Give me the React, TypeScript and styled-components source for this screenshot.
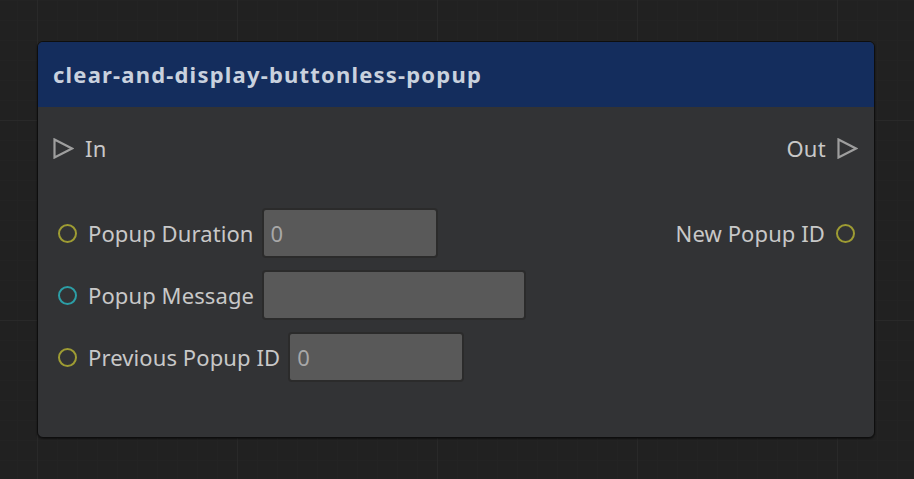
import React from "react";
import styled, { createGlobalStyle } from "styled-components";

const Global = createGlobalStyle`
  html, body { margin: 0; padding: 0; }
  body {
    width: 914px;
    height: 479px;
    overflow: hidden;
    background-color: #212121;
    background-image:
      linear-gradient(to right, #292929 1px, transparent 1px),
      linear-gradient(to bottom, #292929 1px, transparent 1px),
      linear-gradient(to right, #232323 1px, transparent 1px),
      linear-gradient(to bottom, #232323 1px, transparent 1px);
    background-size: 200px 200px, 200px 200px, 20px 20px, 20px 20px;
    background-position: 37px 0, 0 120px, 17px 0, 0 0;
    font-family: "Noto Sans", "Open Sans", sans-serif;
  }
`;

const Canvas = styled.div`
  padding: 41px 0 0 37px;
`;

const Node = styled.div`
  width: 836px;
  height: 395px;
  border: 1px solid #0e0e0e;
  border-radius: 6px;
  background: #323335;
  overflow: hidden;
  display: flex;
  flex-direction: column;
  box-shadow: 0 1px 2px rgba(0,0,0,0.5);
`;

const Header = styled.div`
  height: 65px;
  background: #142d5d;
  display: flex;
  align-items: center;
  padding: 0 15px;
  flex-shrink: 0;
`;

const Title = styled.div`
  color: #c9d1de;
  font-size: 22px;
  font-weight: 700;
  letter-spacing: 1.2px;
  margin-top: -2px;
`;

const Body = styled.div`
  padding: 26px 16px 0 15px;
  display: flex;
  flex-direction: column;
`;

const ExecRow = styled.div`
  display: flex;
  justify-content: space-between;
  align-items: center;
  height: 30px;
`;

const Exec = styled.div`
  display: flex;
  align-items: center;
  gap: 11px;
  color: #c8c8c8;
  font-size: 22px;
  letter-spacing: 0.3px;
`;

const DataArea = styled.div`
  margin-top: 45px;
  display: flex;
  justify-content: space-between;
  align-items: flex-start;
`;

const Column = styled.div<{ $right?: boolean }>`
  display: flex;
  flex-direction: column;
  align-items: ${(p) => (p.$right ? "flex-end" : "flex-start")};
  gap: 12px;
`;

const PinRow = styled.div`
  display: flex;
  align-items: center;
  height: 50px;
  gap: 8px;
  color: #c8c8c8;
  font-size: 22px;
  letter-spacing: 0.1px;
`;

const PinLabel = styled.span`
  margin-left: 3px;
`;

const Socket = styled.span<{ $color: string; $right?: boolean }>`
  width: 15px;
  height: 15px;
  border-radius: 50%;
  border: 2.5px solid ${(p) => p.$color};
  margin-left: ${(p) => (p.$right ? "3px" : "5px")};
  margin-right: ${(p) => (p.$right ? "3px" : "0")};
  flex-shrink: 0;
`;

const Field = styled.div<{ $w: number }>`
  width: ${(p) => p.$w}px;
  height: 50px;
  box-sizing: border-box;
  background: #595959;
  border: 2px solid #2b2b2b;
  border-radius: 4px;
  color: #a8a8a8;
  font-size: 22px;
  display: flex;
  align-items: center;
  padding-left: 7px;
`;

const Arrow = () => (
  <svg width="21" height="21" viewBox="0 0 21 21">
    <path d="M1.5 1.5 L19 10.5 L1.5 19.5 Z" fill="none" stroke="#9e9e9e" strokeWidth="2.2" strokeLinejoin="miter" />
  </svg>
);

const YELLOW = "#9e9c33";
const TEAL = "#2c9ea6";

export default function App() {
  return (
    <>
      <Global />
      <Canvas>
        <Node>
          <Header>
            <Title>clear-and-display-buttonless-popup</Title>
          </Header>
          <Body>
            <ExecRow>
              <Exec>
                <Arrow />
                <span>In</span>
              </Exec>
              <Exec>
                <span>Out</span>
                <Arrow />
              </Exec>
            </ExecRow>
            <DataArea>
              <Column>
                <PinRow>
                  <Socket $color={YELLOW} />
                  <PinLabel>Popup Duration</PinLabel>
                  <Field $w={176}>0</Field>
                </PinRow>
                <PinRow>
                  <Socket $color={TEAL} />
                  <PinLabel>Popup Message</PinLabel>
                  <Field $w={264}></Field>
                </PinRow>
                <PinRow>
                  <Socket $color={YELLOW} />
                  <PinLabel>Previous Popup ID</PinLabel>
                  <Field $w={176}>0</Field>
                </PinRow>
              </Column>
              <Column $right>
                <PinRow>
                  <span>New Popup ID</span>
                  <Socket $color={YELLOW} $right />
                </PinRow>
              </Column>
            </DataArea>
          </Body>
        </Node>
      </Canvas>
    </>
  );
}
